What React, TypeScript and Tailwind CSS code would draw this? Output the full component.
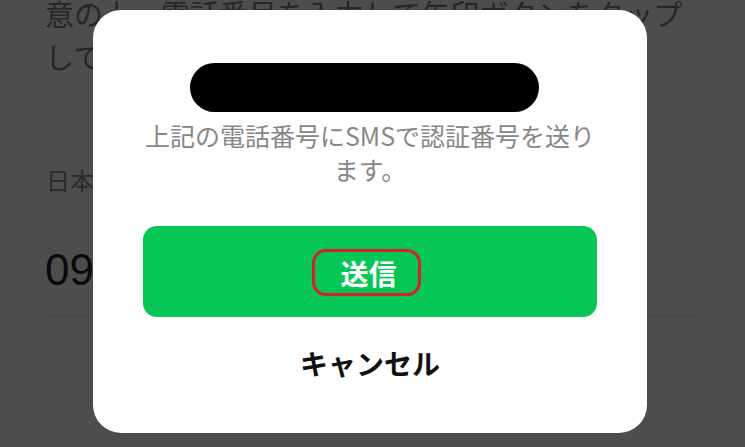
import React from 'react';

const jp = { fontFamily: '"Noto Sans CJK JP", "Noto Sans", sans-serif' };

const App: React.FC = () => {
  return (
    <div className="relative w-[745px] h-[447px] overflow-hidden bg-[#4d4d4d]" style={jp}>
      {/* dimmed page underneath */}
      <div className="flex flex-col">
        <p className="px-[45px] -mt-[8px] text-[29px] leading-[43px] text-[#262626] whitespace-nowrap">
          意の上、電話番号を入力して矢印ボタンをタップ
          <br />
          してください。
        </p>
        <div className="px-[46px] mt-[86px] text-[24px] leading-[32px] text-[#2a2a2a]">日本 (+81)</div>
        <div
          className="px-[45px] mt-[52px] text-[44px] leading-none text-[#0a0a0a]"
          style={{ fontFamily: '"Liberation Sans", Arial, sans-serif' }}
        >
          09012345678
        </div>
        <div className="ml-[43px] mt-[24px] w-[654px] h-px bg-[#444444]" />
      </div>

      {/* dialog */}
      <div className="absolute left-[93px] top-[10px] w-[554px] h-[423px] bg-white rounded-[28px] px-[50px] flex flex-col">
        <div className="ml-[47px] mt-[53px] w-[349px] h-[49px] rounded-full bg-black" />
        <p className="mt-[6px] text-center text-[25px] leading-[34px] text-[#878787]">
          上記の電話番号にSMSで認証番号を送り
          <br />
          ます。
        </p>
        <button className="mt-[40px] h-[91px] w-full rounded-[14px] bg-[#06c755] flex items-center justify-center">
          <span className="mr-[7px] mt-[2px] pl-[4px] inline-flex items-center justify-center w-[109px] h-[47px] border-[3px] border-[#d4232a] rounded-[14px] text-white text-[28px] font-bold leading-none">
            送信
          </span>
        </button>
        <button className="mt-[26px] text-center text-[28px] leading-[40px] font-bold text-[#111111]">
          キャンセル
        </button>
      </div>
    </div>
  );
};

export default App;
